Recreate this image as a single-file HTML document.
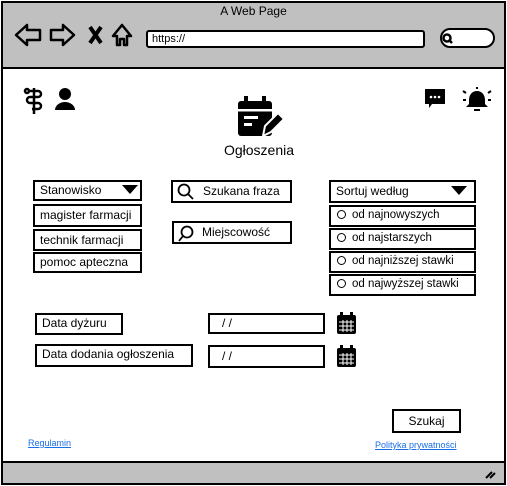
<!DOCTYPE html>
<html><head><meta charset="utf-8"><style>
body{margin:0;width:507px;height:486px;position:relative;background:#fff;font-family:"Liberation Sans",sans-serif;font-size:12px;color:#000;overflow:hidden}
.a{position:absolute;box-sizing:border-box}
.b{border:2px solid #000;background:#fff;padding-left:5px;line-height:17px;white-space:nowrap}
.opt{border:2px solid #000;background:#fff;padding-left:6px;line-height:17px;font-size:11.5px}
.opt:before{content:"";display:inline-block;width:7px;height:7px;border:1.5px solid #000;border-radius:50%;margin-right:6px;vertical-align:-1px}
a{color:#1a6fe8;font-size:9px;text-decoration:underline}
</style></head><body>
<div class="a" style="left:1px;top:1px;width:505px;height:484px;border:2px solid #000"></div>
<div class="a" style="left:3px;top:3px;width:501px;height:66px;background:#c0c0c0;border-bottom:2px solid #000"></div>
<div class="a" style="left:3px;top:461px;width:501px;height:22px;background:#c0c0c0;border-top:2px solid #000"></div>
<div class="a" style="left:0;top:4px;width:507px;text-align:center;font-size:12px">A Web Page</div>
<svg class="a" style="left:0;top:0" width="507" height="486" fill="none" stroke="#000" stroke-width="2.5" stroke-linejoin="round">
<path d="M16 35 L27 25 L27 30 L40 30 L40 40 L27 40 L27 45 Z"/>
<path d="M74 35 L63 25 L63 30 L51 30 L51 40 L63 40 L63 45 Z"/>
<path d="M90 27 L101 43 M101 27 L90 43" stroke-width="4"/>
<path d="M113 36 L122 25 L131 36 L127 36 L127 45 L124 45 L124 39 L120 39 L120 45 L117 45 L117 36 Z"/>
<path d="M490 478 l5 -5 M486 478 l6 -6" stroke-width="2"/>
</svg>
<div class="a" style="left:146px;top:30px;width:279px;height:18px;border:2px solid #000;background:#fff;border-radius:3px;font-size:11px;line-height:14px;padding-left:4px">https://</div>
<div class="a" style="left:440px;top:28px;width:55px;height:20px;border:2px solid #000;background:#fff;border-radius:10px"></div>
<svg class="a" style="left:436px;top:28px" width="20" height="20" fill="none" stroke="#000" stroke-width="2.5"><circle cx="11" cy="10" r="3.5"/><path d="M13 12 l3 3"/></svg>
<!-- icons -->
<svg class="a" style="left:23px;top:86px" width="56" height="30">
<g fill="none" stroke="#000" stroke-width="2.5"><path d="M11 2 V28"/><path d="M6 5 h9 a3 3 0 0 1 0 6 h-8 a3 3 0 0 0 0 6 h8 a3 3 0 0 1 0 6 h-6"/><circle cx="4" cy="5" r="2"/></g>
<circle cx="42" cy="8" r="6"/><path d="M32 24 a10 8 0 0 1 20 0 Z"/>
</svg>
<svg class="a" style="left:236px;top:96px" width="50" height="42">
<rect x="2" y="5" width="34" height="35" rx="3"/><rect x="8" y="0" width="4" height="8"/><rect x="26" y="0" width="4" height="8"/>
<rect x="2" y="13" width="34" height="2.5" fill="#fff"/>
<rect x="8" y="20" width="14" height="3" fill="#fff"/><rect x="8" y="27" width="8" height="3" fill="#fff"/>
<path d="M27 40 L29 30 L42 17 L48 23 L35 36 Z" fill="#000" stroke="#fff" stroke-width="2"/>
</svg>
<div class="a" style="left:200px;top:141px;width:118px;text-align:center;font-size:14px;top:142px">Ogłoszenia</div>
<svg class="a" style="left:423px;top:86px" width="72" height="28">
<path d="M2 3 h20 v15 h-13 l-3 4 v-4 h-4 Z"/><circle cx="8" cy="11" r="1.3" fill="#fff"/><circle cx="12" cy="11" r="1.3" fill="#fff"/><circle cx="16" cy="11" r="1.3" fill="#fff"/>
<path d="M54 5 c-5 0 -8 4 -8 9 v4 l-3 3 h22 l-3 -3 v-4 c0 -5 -3 -9 -8 -9 Z"/><rect x="51" y="23" width="6" height="2"/>
<path d="M40 5 l3 2 M68 5 l-3 2 M40 14 h3 M65 14 h3 M54 3 v-2" fill="none" stroke="#000" stroke-width="2"/>
</svg>
<!-- left column -->
<div class="a b" style="left:33px;top:180px;width:109px;height:21px">Stanowisko</div>
<svg class="a" style="left:122px;top:185px" width="16" height="10"><path d="M0 0 h16 l-8 9 Z"/></svg>
<div class="a b" style="left:33px;top:204px;width:109px;height:23px;line-height:19px">magister farmacji</div>
<div class="a b" style="left:33px;top:229px;width:109px;height:22px;line-height:18px">technik farmacji</div>
<div class="a b" style="left:33px;top:252px;width:109px;height:21px">pomoc apteczna</div>
<!-- middle -->
<div class="a b" style="left:171px;top:180px;width:121px;height:23px;line-height:19px;padding-left:30px">Szukana fraza</div>
<div class="a b" style="left:172px;top:221px;width:120px;height:23px;line-height:18px;padding-left:28px">Miejscowość</div>
<svg class="a" style="left:176px;top:181px" width="20" height="65" fill="none" stroke="#000" stroke-width="1.8"><circle cx="8" cy="9" r="5.5"/><path d="M12 13 l5 5"/><circle cx="11" cy="51" r="5.5"/><path d="M7 55 l-4 5"/></svg>
<!-- right -->
<div class="a b" style="left:329px;top:180px;width:147px;height:23px;line-height:19px">Sortuj według</div>
<svg class="a" style="left:451px;top:186px" width="16" height="10"><path d="M0 0 h16 l-8 9 Z"/></svg>
<div class="a opt" style="left:329px;top:205px;width:147px;height:22px">od najnowyszych</div>
<div class="a opt" style="left:329px;top:228px;width:147px;height:22px">od najstarszych</div>
<div class="a opt" style="left:329px;top:251px;width:147px;height:22px">od najniższej stawki</div>
<div class="a opt" style="left:329px;top:274px;width:147px;height:22px">od najwyższej stawki</div>
<!-- dates -->
<div class="a b" style="left:35px;top:313px;width:88px;height:22px">Data dyżuru</div>
<div class="a b" style="left:35px;top:344px;width:158px;height:23px">Data dodania ogłoszenia</div>
<div class="a b" style="left:208px;top:313px;width:117px;height:21px;padding-left:12px">/ /</div>
<div class="a b" style="left:208px;top:345px;width:117px;height:23px;padding-left:12px;line-height:19px">/ /</div>
<svg class="a" style="left:336px;top:312px" width="21" height="56">
<g id="c"><rect x="1" y="3" width="19" height="19" rx="2"/><rect x="4" y="0" width="3" height="5"/><rect x="14" y="0" width="3" height="5"/>
<path d="M3 10 h15 M3 14 h15 M3 18 h15 M7 8 v12 M11 8 v12 M15 8 v12" stroke="#fff" stroke-width="1"/></g>
<use href="#c" y="33"/>
</svg>
<div class="a b" style="left:392px;top:409px;width:69px;height:24px;text-align:center;padding:0;line-height:20px">Szukaj</div>
<a class="a" style="left:28px;top:438px">Regulamin</a>
<a class="a" style="left:375px;top:440px">Polityka prywatności</a>
</body></html>
